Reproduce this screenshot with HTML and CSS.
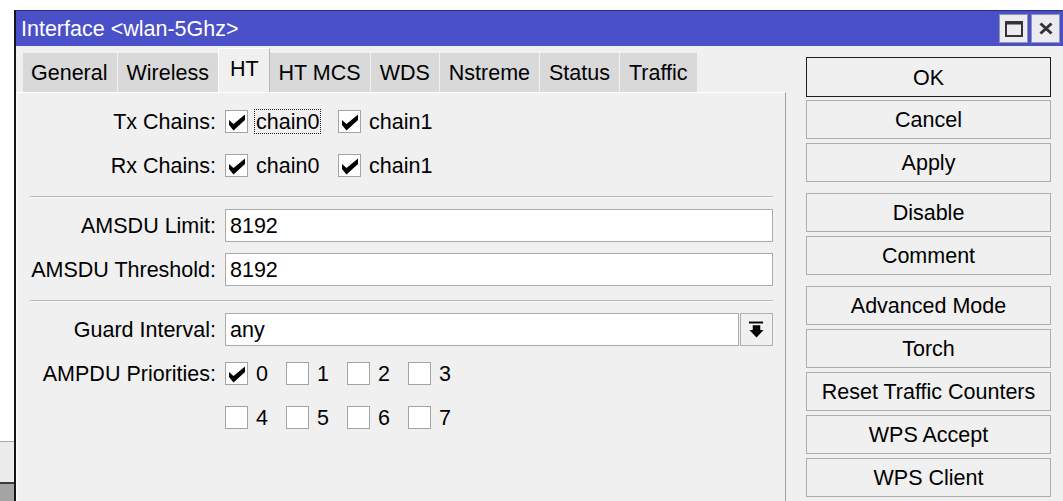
FILE: index.html
```html
<!DOCTYPE html>
<html lang="en">
<head>
<meta charset="utf-8">
<title>Interface &lt;wlan-5Ghz&gt;</title>
<link rel="stylesheet" href="styles.css">
</head>
<body>
<div class="screen">
  <div class="backdrop">
    <div class="bd-white"></div>
    <div class="bd-panel"></div>
    <div class="bd-bar"></div>
  </div>
  <div class="window">
    <div class="titlebar">
      <span class="title">Interface &lt;wlan-5Ghz&gt;</span>
      <div class="tb-buttons">
        <div class="tb-btn">
          <svg width="18" height="16" viewBox="0 0 18 16"><rect x="1" y="1.5" width="16" height="13.5" fill="none" stroke="#333" stroke-width="2"/><rect x="0" y="0" width="18" height="3.5" fill="#333"/></svg>
        </div>
        <div class="tb-btn">
          <svg width="14" height="13" viewBox="0 0 14 13"><path d="M1.5 1.5 L12.5 11.5 M12.5 1.5 L1.5 11.5" stroke="#333" stroke-width="3" fill="none"/></svg>
        </div>
      </div>
    </div>
    <div class="body">
      <div class="main">
        <div class="tabs">
          <div class="tab">General</div>
          <div class="tab">Wireless</div>
          <div class="tab active">HT</div>
          <div class="tab">HT MCS</div>
          <div class="tab">WDS</div>
          <div class="tab">Nstreme</div>
          <div class="tab">Status</div>
          <div class="tab">Traffic</div>
        </div>
        <div class="panel">
          <div class="row">
            <div class="label">Tx Chains:</div>
            <div class="cb-item wide"><span class="cb"><svg viewBox="0 0 21 21" width="21" height="21"><polygon points="3,9 7.5,13 19,3.5 19,9 7.5,19.5 3,14" fill="#000"/></svg></span><span class="cb-text focus">chain0</span></div>
            <div class="cb-item wide"><span class="cb"><svg viewBox="0 0 21 21" width="21" height="21"><polygon points="3,9 7.5,13 19,3.5 19,9 7.5,19.5 3,14" fill="#000"/></svg></span><span class="cb-text">chain1</span></div>
          </div>
          <div class="row gap21">
            <div class="label">Rx Chains:</div>
            <div class="cb-item wide"><span class="cb"><svg viewBox="0 0 21 21" width="21" height="21"><polygon points="3,9 7.5,13 19,3.5 19,9 7.5,19.5 3,14" fill="#000"/></svg></span><span class="cb-text">chain0</span></div>
            <div class="cb-item wide"><span class="cb"><svg viewBox="0 0 21 21" width="21" height="21"><polygon points="3,9 7.5,13 19,3.5 19,9 7.5,19.5 3,14" fill="#000"/></svg></span><span class="cb-text">chain1</span></div>
          </div>
          <div class="sep first"></div>
          <div class="row field">
            <div class="label">AMSDU Limit:</div>
            <div class="input">8192</div>
          </div>
          <div class="row field gap11">
            <div class="label">AMSDU Threshold:</div>
            <div class="input">8192</div>
          </div>
          <div class="sep second"></div>
          <div class="row field">
            <div class="label">Guard Interval:</div>
            <div class="input">any</div>
            <div class="dd-btn">
              <svg width="33" height="33" viewBox="0 0 33 33"><rect x="8.5" y="7" width="15" height="2" fill="#000"/><polygon points="12.5,11 20.5,11 20.5,16 24,16 16.5,24 9,16 12.5,16" fill="#000"/></svg>
            </div>
          </div>
          <div class="row gap16">
            <div class="label">AMPDU Priorities:</div>
            <div class="cb-item"><span class="cb"><svg viewBox="0 0 21 21" width="21" height="21"><polygon points="3,9 7.5,13 19,3.5 19,9 7.5,19.5 3,14" fill="#000"/></svg></span><span class="cb-text">0</span></div>
            <div class="cb-item"><span class="cb"></span><span class="cb-text">1</span></div>
            <div class="cb-item"><span class="cb"></span><span class="cb-text">2</span></div>
            <div class="cb-item"><span class="cb"></span><span class="cb-text">3</span></div>
          </div>
          <div class="row gap21">
            <div class="label"></div>
            <div class="cb-item"><span class="cb"></span><span class="cb-text">4</span></div>
            <div class="cb-item"><span class="cb"></span><span class="cb-text">5</span></div>
            <div class="cb-item"><span class="cb"></span><span class="cb-text">6</span></div>
            <div class="cb-item"><span class="cb"></span><span class="cb-text">7</span></div>
          </div>
        </div>
      </div>
      <div class="actions">
        <div class="group">
          <div class="btn default">OK</div>
          <div class="btn">Cancel</div>
          <div class="btn">Apply</div>
        </div>
        <div class="group">
          <div class="btn">Disable</div>
          <div class="btn">Comment</div>
        </div>
        <div class="group">
          <div class="btn">Advanced Mode</div>
          <div class="btn">Torch</div>
          <div class="btn">Reset Traffic Counters</div>
          <div class="btn">WPS Accept</div>
          <div class="btn">WPS Client</div>
        </div>
      </div>
    </div>
  </div>
</div>
</body>
</html>
```

FILE: styles.css
```css
* { box-sizing: border-box; }
html, body { margin: 0; padding: 0; background: #fff; }
body {
  font-family: "Liberation Sans", Arial, sans-serif;
  font-size: 21.5px;
  color: #000;
}
.screen {
  display: flex;
  width: 1063px;
  height: 501px;
  overflow: hidden;
}
.backdrop {
  width: 14px;
  flex: none;
  display: flex;
  flex-direction: column;
}
.bd-white { height: 441px; background: #fff; }
.bd-panel { height: 41px; background: #ececec; border-top: 1px solid #a8a8a8; }
.bd-bar { flex: 1; background: #a4a4a4; border-top: 2px solid #3c3c3c; }

.window {
  flex: 1;
  min-width: 0;
  margin-top: 10px;
  border-top: 1px solid #2a2e80;
  border-left: 2px solid #151515;
  background: #f0f0f0;
  display: flex;
  flex-direction: column;
}
.titlebar {
  height: 35px;
  flex: none;
  background: #4a50c8;
  display: flex;
  align-items: center;
  justify-content: space-between;
  padding: 0 3px 0 5px;
}
.title { color: #fff; white-space: nowrap; padding-top: 2px; }
.tb-buttons { display: flex; gap: 3px; }
.tb-btn {
  width: 29px;
  height: 29px;
  background: #ecebf1;
  border: 1px solid #9494ac;
  display: flex;
  align-items: center;
  justify-content: center;
}

.body { display: flex; flex: 1; }
.main {
  width: 770px;
  flex: none;
  display: flex;
  flex-direction: column;
}
.tabs {
  height: 46px;
  display: flex;
  align-items: flex-end;
  padding: 0 0 0 7px;
}
.tab {
  height: 39px;
  padding: 1px 9px 0;
  background: #d9d9d9;
  border-left: 1px solid #f2f2f2;
  display: flex;
  align-items: center;
  white-space: nowrap;
}
.tab:first-child { border-left: none; padding-left: 8px; }
.tab.active {
  height: 44px;
  background: #f0f0f0;
  border-left: 1px solid #fff;
  border-top: 1px solid #fff;
  border-right: 1px solid #b8b8b8;
  padding: 0 10px 2px 11px;
}
.tab.active + .tab { border-left: none; }

.panel {
  flex: 1;
  border-top: 1px solid #fff;
  border-left: 2px solid #f8f8f8;
  border-right: 1px solid #a0a0a0;
  padding: 17px 12px 0 0;
  display: flex;
  flex-direction: column;
}
.row {
  display: flex;
  align-items: center;
  height: 23px;
}
.row.field { height: 33px; }
.gap21 { margin-top: 21px; }
.gap11 { margin-top: 11px; }
.gap16 { margin-top: 16px; }
.label {
  width: 198px;
  flex: none;
  margin-right: 9px;
  text-align: right;
  white-space: nowrap;
  padding-top: 1px;
}
.cb-item {
  width: 61px;
  flex: none;
  display: flex;
  align-items: center;
}
.cb-item.wide { width: 113px; }
.cb {
  width: 23px;
  height: 23px;
  flex: none;
  background: #fff;
  border: 1px solid #a3a3a3;
  display: flex;
  align-items: center;
  justify-content: center;
}
.cb-text {
  margin-left: 6px;
  padding: 1px 1px 0;
  border: 1px dotted transparent;
  line-height: 22px;
}
.cb-text.focus { border-color: #222; }

.sep {
  margin-left: 12px;
  border-top: 1px solid #b9b9b9;
  border-bottom: 1px solid #fcfcfc;
  height: 2px;
}
.sep.first { margin-top: 19px; margin-bottom: 11px; }
.sep.second { margin-top: 14px; margin-bottom: 11px; }

.input {
  flex: 1;
  height: 33px;
  background: #fff;
  border: 1px solid #ababab;
  padding: 2px 0 0 4px;
  display: flex;
  align-items: center;
}
.dd-btn {
  width: 33px;
  height: 33px;
  flex: none;
  margin-left: 1px;
  border: 1px solid #b0b0b0;
  background: #f0f0f0;
  display: flex;
}

.actions {
  width: 245px;
  flex: none;
  margin-left: 20px;
  padding-top: 11px;
  display: flex;
  flex-direction: column;
  gap: 11px;
}
.group { display: flex; flex-direction: column; gap: 4px; }
.btn {
  height: 39px;
  border: 1px solid #adadad;
  background: #f0f0f0;
  display: flex;
  align-items: center;
  justify-content: center;
  padding-top: 2px;
  white-space: nowrap;
}
.btn.default { border-color: #1e1e1e; height: 40px; margin-bottom: -1px; }
```
